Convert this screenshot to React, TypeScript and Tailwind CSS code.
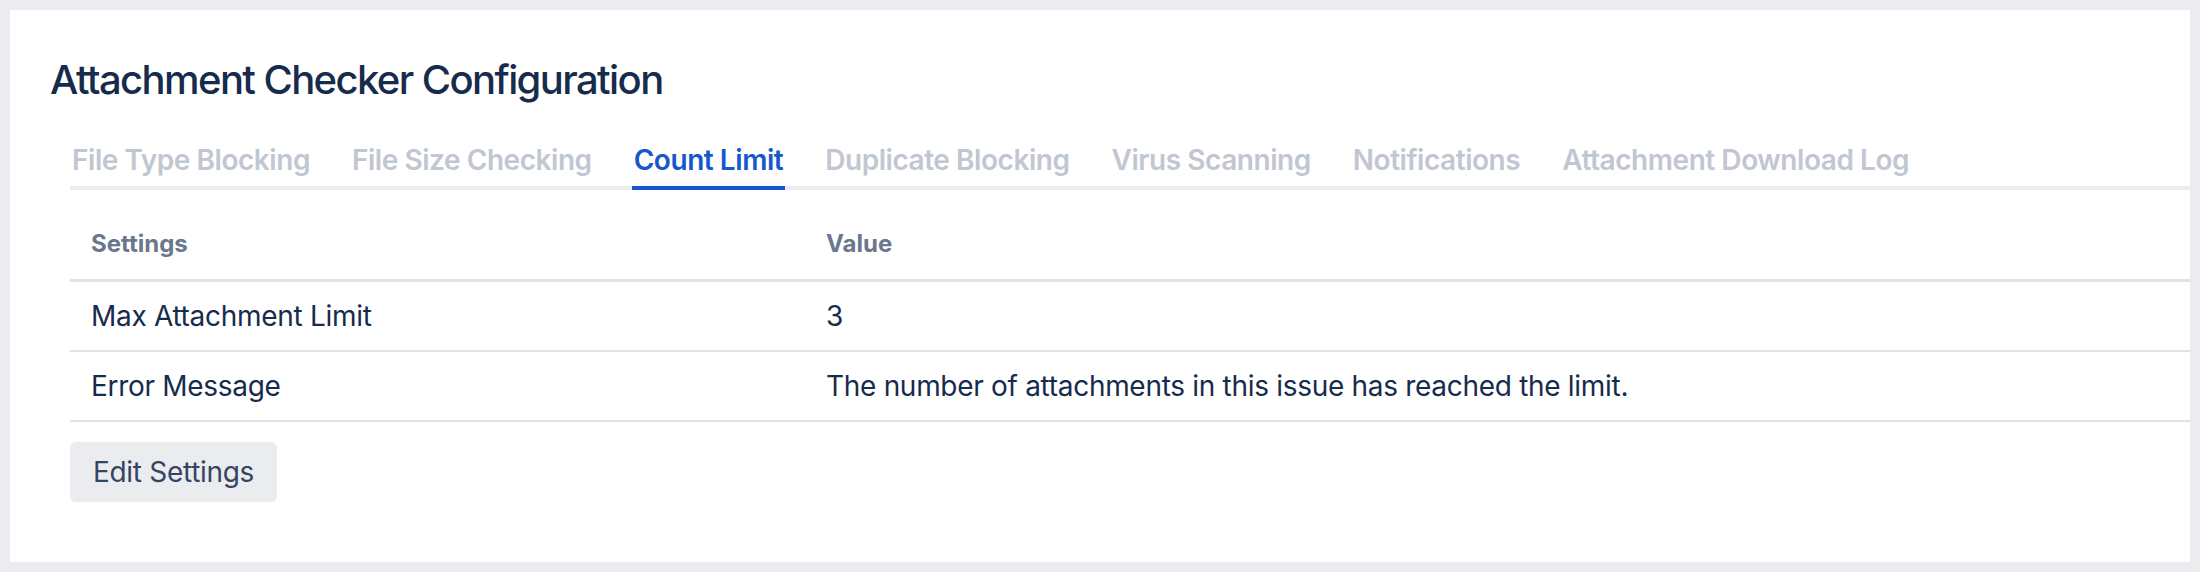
const tabs = [
  "File Type Blocking",
  "File Size Checking",
  "Count Limit",
  "Duplicate Blocking",
  "Virus Scanning",
  "Notifications",
  "Attachment Download Log",
];

const rows = [
  { name: "Max Attachment Limit", value: "3" },
  {
    name: "Error Message",
    value: "The number of attachments in this issue has reached the limit.",
  },
];

const App = () => {
  return (
    <div className="h-[572px] w-[2200px] bg-[#ebecf0] p-[10px] font-['Inter','Liberation_Sans',sans-serif]">
      <div className="flex h-full flex-col bg-white pl-[40px] pt-[46px]">
        <h1 className="text-[40px] font-medium leading-[48px] tracking-[-1.6px] text-[#172b4d]">
          Attachment Checker Configuration
        </h1>

        <div className="ml-[20px] mt-[40px] flex flex-col">
          <div className="flex gap-[38px] border-b-4 border-[#ebecf0]">
            {tabs.map((tab) => {
              const active = tab === "Count Limit";
              return (
                <div
                  key={tab}
                  className={
                    active
                      ? "-mb-[4px] border-b-4 border-[#1757cc] px-[2px] pb-[10px] text-[28px] font-semibold leading-[32px] tracking-[-0.45px] text-[#1757cc]"
                      : "px-[2px] pb-[10px] text-[28px] font-semibold leading-[32px] tracking-[-0.45px] text-[#c1c7d0]"
                  }
                >
                  {tab}
                </div>
              );
            })}
          </div>

          <table className="w-full table-fixed border-collapse">
            <thead>
              <tr className="border-b-[3px] border-[#dfe1e6]">
                <th className="w-[736px] pb-[19px] pl-[21px] pt-[38px] text-left text-[24px] font-bold leading-[32px] text-[#6b778c]">
                  Settings
                </th>
                <th className="pb-[19px] pl-[20px] pt-[38px] text-left text-[24px] font-bold leading-[32px] text-[#6b778c]">
                  Value
                </th>
              </tr>
            </thead>
            <tbody>
              {rows.map((row) => (
                <tr key={row.name} className="border-b-2 border-[#dfe1e6]">
                  <td className="py-[18px] pl-[21px] text-[28px] leading-[32px] tracking-[-0.3px] text-[#172b4d]">
                    {row.name}
                  </td>
                  <td className="py-[18px] pl-[20px] text-[28px] leading-[32px] tracking-[-0.3px] text-[#172b4d]">
                    {row.value}
                  </td>
                </tr>
              ))}
            </tbody>
          </table>

          <div className="mt-[20px]">
            <button className="h-[60px] rounded-[6px] bg-[#ebecf0] px-[23px] text-[28px] leading-[32px] tracking-[-0.3px] text-[#344563]">
              Edit Settings
            </button>
          </div>
        </div>
      </div>
    </div>
  );
};

export default App;
